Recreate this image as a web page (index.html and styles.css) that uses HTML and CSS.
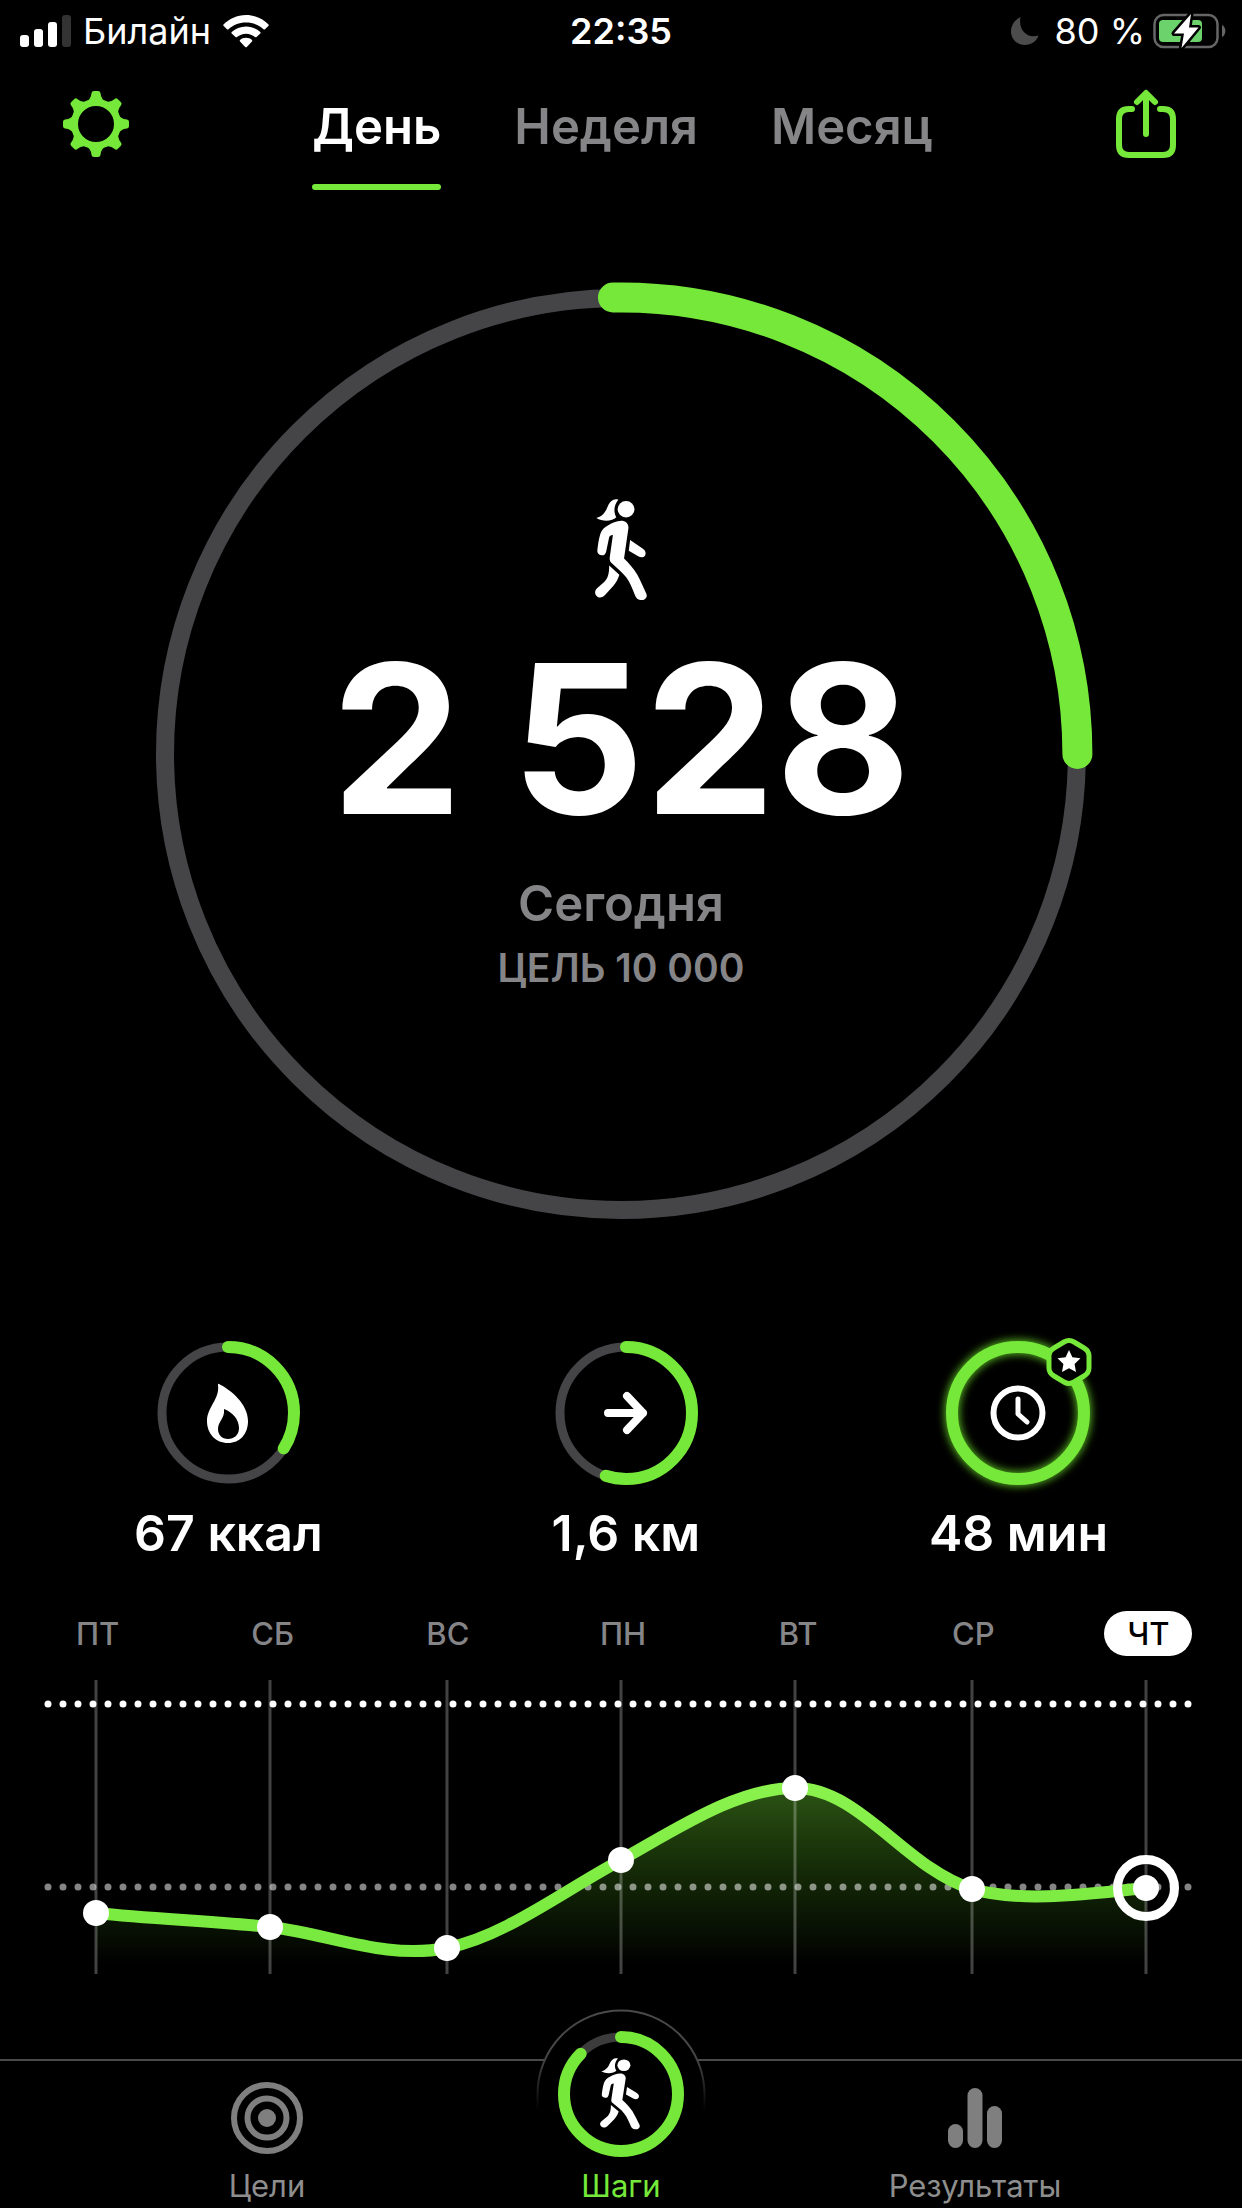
FILE: index.html
```html
<!DOCTYPE html>
<html lang="ru">
<head>
  <meta charset="UTF-8" />
  <meta name="viewport" content="width=device-width, initial-scale=1.0"/>
  <title>Шаги</title>
  <link rel="stylesheet" href="styles.css">
</head>
<body>
  <!-- shared shapes -->
  <svg class="defs" width="0" height="0" aria-hidden="true">
    <symbol id="walker" viewBox="162 718 154 308" preserveAspectRatio="none">
      <g fill="#fff">
        <circle cx="254" cy="749" r="25"/>
        <path d="M231 720C216 716 206 726 200 740C194 755 185 771 166 775C184 787 213 786 225 773C216 757 218 736 231 720Z"/>
        <path d="M240 784C252 784 262 793 261 806L248 898C262 912 276 928 287 946C297 965 306 986 314 1004C319 1017 307 1025 296 1023C289 1022 284 1017 281 1010C273 990 266 970 255 955C242 937 224 924 211 911C205 905 205 900 206 892L215 827C207 827 204 831 203 838L195 877C193 885 188 889 181 888C172 887 168 881 169 872C171 856 173 838 178 823C182 811 190 803 200 798C211 791 226 784 240 784Z"/>
        <path d="M266 842L304 868C312 874 314 882 310 889C305 895 298 896 290 891L262 874Z"/>
        <path d="M204 919L234 947C231 958 225 970 216 981L191 1009C183 1017 173 1018 167 1011C160 1004 161 994 169 987L190 968C201 957 204 942 204 919Z"/>
      </g>
    </symbol>
    <linearGradient id="area" gradientUnits="userSpaceOnUse" x1="0" y1="100" x2="0" y2="285">
      <stop offset="0" stop-color="#7be83c" stop-opacity=".38"/>
      <stop offset=".55" stop-color="#63d020" stop-opacity=".18"/>
      <stop offset="1" stop-color="#63d020" stop-opacity="0"/>
    </linearGradient>
    <linearGradient id="curve" gradientUnits="userSpaceOnUse" x1="0" y1="100" x2="0" y2="280">
      <stop offset="0" stop-color="#8bf24d"/>
      <stop offset="1" stop-color="#76e83d"/>
    </linearGradient>
    <linearGradient id="notch" gradientUnits="userSpaceOnUse" x1="0" y1="2" x2="0" y2="104">
      <stop offset="0" stop-color="#4a4a4a"/>
      <stop offset=".5" stop-color="#444"/>
      <stop offset="1" stop-color="#444" stop-opacity="0"/>
    </linearGradient>
    <filter id="glow" x="-20%" y="-20%" width="140%" height="140%">
      <feGaussianBlur stdDeviation="4"/>
    </filter>
  </svg>

  <div class="status-bar">
    <div class="status-left">
      <svg width="51" height="32" viewBox="0 0 51 32" fill="#fff">
        <rect x="0" y="20" width="9" height="12" rx="3"/>
        <rect x="14" y="14" width="9" height="18" rx="3"/>
        <rect x="28" y="7" width="9" height="25" rx="3"/>
        <rect x="42" y="0" width="9" height="32" rx="3" fill="#333"/>
      </svg>
      <span>Билайн</span>
      <svg width="46" height="33" viewBox="0 0 46 33" fill="#fff">
        <path d="M23 0C32 0 40 4 45.5 9.5Q46 10.3 45.3 11L42 14.2Q41.3 14.8 40.5 14.2C36 10 30 7.5 23 7.500S10 10 5.5 14.2Q4.7 14.8 4 14.2L.7 11Q0 10.3.5 9.5C6 4 14 0 23 0Z"/>
        <path d="M23 11.5C28.5 11.5 33.5 13.7 37.3 17Q38 17.8 37.3 18.5L33.5 22Q32.8 22.6 32 22C29.5 20 26.5 18.7 23 18.7S16.5 20 14 22Q13.2 22.6 12.5 22L8.7 18.5Q8 17.8 8.7 17C12.5 13.7 17.5 11.5 23 11.5Z"/>
        <path d="M23 22.8C25.5 22.8 27.5 23.6 29 25Q29.8 25.8 29 26.5L23.8 32Q23 32.7 22.2 32L17 26.5Q16.2 25.8 17 25C18.5 23.6 20.5 22.8 23 22.8Z"/>
      </svg>
    </div>
    <time class="status-time">22:35</time>
    <div class="status-right">
      <svg class="moon" width="28" height="28" viewBox="0 0 28 28">
        <path d="M9.5 0C2 4 0 10 0 14.5C0 22 6 28 14 28C20 28 25.5 24.5 27.5 18.5C16 22 7 13 9.5 0Z" fill="#4c4c4c"/>
      </svg>
      <span>80 %</span>
      <svg width="69" height="36" viewBox="0 0 69 36">
        <rect x="1.5" y="2" width="63" height="32" rx="9" fill="none" stroke="#666" stroke-width="2.5"/>
        <path d="M69 12C73.5 14 73.5 22 69 24Z" fill="#666"/>
        <rect x="6" y="7" width="43" height="22" rx="4" fill="#6bd26c"/>
        <path d="M38 1L21 20.5H31L28.5 35L45.5 14.5H36Z" fill="#fff" stroke="#000" stroke-width="5" stroke-linejoin="round" paint-order="stroke"/>
      </svg>
    </div>
  </div>

  <header>
    <button class="icon-btn" aria-label="Настройки">
      <svg width="66" height="66" viewBox="-33 -33 66 66">
        <g fill="#75e83a">
          <g id="teeth">
            <path id="tooth" d="M-11 -22Q-5 -24 -4.5 -31Q-4.2 -33 -2 -33H2Q4.2 -33 4.5 -31Q5 -24 11 -22Z"/>
            <use href="#tooth" transform="rotate(45)"/>
            <use href="#tooth" transform="rotate(90)"/>
            <use href="#tooth" transform="rotate(135)"/>
          </g>
          <use href="#teeth" transform="rotate(180)"/>
        </g>
        <circle r="21.5" fill="#000" stroke="#75e83a" stroke-width="7"/>
      </svg>
    </button>
    <nav class="tabs">
      <button class="tab active">День</button>
      <button class="tab">Неделя</button>
      <button class="tab">Месяц</button>
    </nav>
    <button class="icon-btn" aria-label="Поделиться">
      <svg width="60" height="70" viewBox="0 0 60 70" fill="none" stroke="#75e83a" stroke-width="6" stroke-linecap="round" stroke-linejoin="round">
        <path d="M16 20H13Q3 20 3 30V56Q3 66 13 66H47Q57 66 57 56V30Q57 20 47 20H44"/>
        <path d="M30 45V5M21 13L30 4L39 13"/>
      </svg>
    </button>
  </header>

  <main>
    <section class="goal">
      <svg class="goal-ring" viewBox="0 0 944 944" fill="none">
        <circle cx="472" cy="472" r="456" stroke="#454447" stroke-width="18"/>
        <path d="M464 15.5H472A456.5 456.5 0 0 1 928.5 472" stroke="#75e83a" stroke-width="30" stroke-linecap="round"/>
      </svg>
      <div class="goal-info">
        <svg width="52" height="102"><use href="#walker"/></svg>
        <div class="steps">2 528</div>
        <div class="period">Сегодня</div>
        <div class="target">ЦЕЛЬ 10 000</div>
      </div>
    </section>

    <section class="stats">
      <div class="stat">
        <svg width="168" height="168" viewBox="-84 -84 168 168" fill="none">
          <circle r="66" stroke="#454447" stroke-width="9"/>
          <circle class="progress" r="66" pathLength="100" stroke-dasharray="34 100"/>
          <path fill="#fff" fill-rule="evenodd" d="M-9 -29C3 -23 20 -9 20 8C20 21 12 30 0 30S-21 21 -21 8C-21 -6 -8 -14 -10 -28Q-10 -30 -9 -29ZM-4 -4C-3 6 -10 8 -10 16C-10 22 -6 26 0 26S11 22 11 15C11 6 4 -1 -4 -4Z"/>
        </svg>
        <div class="stat-value">67 ккал</div>
      </div>
      <div class="stat">
        <svg width="168" height="168" viewBox="-84 -84 168 168" fill="none">
          <circle r="66" stroke="#454447" stroke-width="9"/>
          <circle class="progress" r="66" pathLength="100" stroke-dasharray="55 100"/>
          <path d="M-18 0H17M1 -17L17 0L1 17" stroke="#fff" stroke-width="8" stroke-linecap="round" stroke-linejoin="round"/>
        </svg>
        <div class="stat-value">1,6 км</div>
      </div>
      <div class="stat">
        <svg width="168" height="168" viewBox="-84 -84 168 168" fill="none">
          <circle r="66" stroke="#5bbd22" stroke-width="14" filter="url(#glow)"/>
          <circle r="66" stroke="#75e83a" stroke-width="12"/>
          <circle r="24.5" stroke="#fff" stroke-width="6"/>
          <path d="M0 -14V1L9 9" stroke="#fff" stroke-width="5" stroke-linecap="round" stroke-linejoin="round"/>
          <g transform="translate(51 -51)">
            <path d="M-5 -20Q0 -23 5 -20L15 -14Q20 -11 20 -6V6Q20 11 15 14L5 20Q0 23 -5 20L-15 14Q-20 11 -20 6V-6Q-20 -11 -15 -14Z" fill="#000" stroke="#75e83a" stroke-width="5"/>
            <path d="M0 -12L3.4 -4.8L11.5 -3.8L5.6 1.9L7 10L0 6.2L-7 10L-5.6 1.9L-11.5 -3.8L-3.4 -4.8Z" fill="#fff"/>
          </g>
        </svg>
        <div class="stat-value">48 мин</div>
      </div>
    </section>

    <section class="week">
      <div class="days">
        <button class="day">ПТ</button>
        <button class="day">СБ</button>
        <button class="day">ВС</button>
        <button class="day">ПН</button>
        <button class="day">ВТ</button>
        <button class="day">СР</button>
        <button class="day selected">ЧТ</button>
      </div>
      <svg class="chart" viewBox="0 0 1242 294" fill="none">
        <path fill="url(#area)" d="M96 233C154 239 212 241 270 247C330 254 385 280 447 268C505 256 560 213 621 180C680 147 738 108 795 108C860 108 905 188 972 209C1020 223 1088 214 1146 208V294H96Z"/>
        <path d="M96 0V294M270 0V294M447 0V294M621 0V294M795 0V294M972 0V294M1146 0V294" stroke="#fff" stroke-opacity=".26" stroke-width="3"/>
        <path class="dots" d="M48 24H1190"/>
        <path class="dots average" d="M48 207H1190"/>
        <path d="M96 233C154 239 212 241 270 247C330 254 385 280 447 268C505 256 560 213 621 180C680 147 738 108 795 108C860 108 905 188 972 209C1020 223 1088 214 1146 208" stroke="url(#curve)" stroke-width="12"/>
        <g fill="#fff">
          <circle cx="96" cy="233" r="13"/>
          <circle cx="270" cy="247" r="13"/>
          <circle cx="447" cy="268" r="13"/>
          <circle cx="621" cy="180" r="13"/>
          <circle cx="795" cy="108" r="13"/>
          <circle cx="972" cy="209" r="13"/>
          <circle cx="1146" cy="208" r="13"/>
        </g>
        <circle cx="1146" cy="208" r="28.5" stroke="#fff" stroke-width="9"/>
      </svg>
    </section>
  </main>

  <nav class="tab-bar">
    <button class="tab-item">
      <svg width="72" height="72" viewBox="-36 -36 72 72" fill="none" stroke="#7f7f7f" stroke-width="6">
        <circle r="33"/>
        <circle r="19.5"/>
        <circle r="9" fill="#7f7f7f" stroke="none"/>
      </svg>
      <span>Цели</span>
    </button>
    <button class="tab-item current">
      <svg class="steps-icon" width="170" height="150" viewBox="-85 -90 170 150" fill="none">
        <circle r="84" fill="#000"/>
        <g transform="translate(-85 -87)">
          <path d="M1.5 104V87A83.5 83.5 0 0 1 168.5 87V104" stroke="url(#notch)" stroke-width="2"/>
        </g>
        <circle r="57" stroke="#3c3c3c" stroke-width="9"/>
        <circle class="progress" r="57" pathLength="100" stroke-dasharray="87.5 100"/>
        <use href="#walker" x="-21" y="-36" width="40" height="72"/>
      </svg>
      <span>Шаги</span>
    </button>
    <button class="tab-item">
      <svg width="72" height="72" viewBox="-36 -36 72 72" fill="#7f7f7f">
        <rect x="-27" y="6" width="15" height="24" rx="7.5"/>
        <rect x="-7.5" y="-30" width="15" height="60" rx="7.5"/>
        <rect x="12" y="-12" width="15" height="42" rx="7.5"/>
      </svg>
      <span>Результаты</span>
    </button>
  </nav>
</body>
</html>
```

FILE: styles.css
```css
body {
  margin: 0;
  min-height: 100vh;
  display: flex;
  flex-direction: column;
  background: #000;
  color: #fff;
  font-family: Inter, "Liberation Sans", sans-serif;
}
button {
  font: inherit;
  color: inherit;
  background: none;
  border: none;
  padding: 0;
  cursor: pointer;
}
svg {
  display: block;
  flex-shrink: 0;
  overflow: visible;
}
.defs {
  position: absolute;
}

/* status bar */
.status-bar {
  display: grid;
  grid-template-columns: 1fr auto 1fr;
  align-items: center;
  height: 62px;
  padding: 0 20px;
  font-size: 36px;
  line-height: 62px;
}
.status-left,
.status-right {
  display: flex;
  align-items: center;
  gap: 12px;
}
.status-right {
  justify-content: flex-end;
  gap: 8px;
}
.moon {
  margin-right: 8px;
}
.status-time {
  font-weight: 600;
}

/* header */
header {
  display: flex;
  justify-content: space-between;
  align-items: flex-start;
  padding: 0 66px 0 63px;
}
.icon-btn {
  display: flex;
  align-items: center;
  justify-content: center;
  height: 124px;
}
.tabs {
  display: flex;
  gap: 73px;
}
.tab {
  padding-top: 35px;
  font-size: 49px;
  line-height: 60px;
  font-weight: 600;
  color: #858588;
}
.tab::after {
  content: "";
  display: block;
  height: 6px;
  margin-top: 27px;
  border-radius: 3px;
}
.tab.active {
  color: #fff;
}
.tab.active::after {
  background: #75e83a;
}

/* daily goal */
.goal {
  display: grid;
  justify-items: center;
  align-items: center;
  margin-top: 92px;
}
.goal-ring,
.goal-info {
  grid-area: 1 / 1;
}
.goal-ring {
  width: 76%;
}
.goal-info {
  display: flex;
  flex-direction: column;
  align-items: center;
  padding-bottom: 16px;
}
.steps {
  margin-top: 35px;
  font-size: 208px;
  line-height: 204px;
  font-weight: 700;
}
.period {
  margin-top: 34px;
  font-size: 49px;
  line-height: 60px;
  font-weight: 600;
  color: #858588;
}
.target {
  margin-top: 10px;
  font-size: 39px;
  line-height: 48px;
  font-weight: 600;
  color: #858588;
}

/* calories, distance, time */
.stats {
  display: flex;
  justify-content: space-between;
  margin-top: 103px;
  padding: 0 134px;
}
.stat {
  display: flex;
  flex-direction: column;
  align-items: center;
}
.stat-value {
  margin-top: 6px;
  font-size: 50px;
  line-height: 60px;
  font-weight: 600;
}
.progress {
  stroke: #75e83a;
  stroke-width: 12px;
  stroke-linecap: round;
  transform: rotate(-90deg);
}

/* week chart */
.days {
  display: grid;
  grid-template-columns: repeat(7, 1fr);
  justify-items: center;
  margin-top: 48px;
  padding: 0 6px 0 10px;
}
.day {
  padding: 0 23px;
  border-radius: 23px;
  font-size: 31px;
  line-height: 45px;
  font-weight: 500;
  color: #858588;
}
.day.selected {
  background: #fff;
  color: #000;
}
.chart {
  width: 100%;
  margin-top: 24px;
}
.dots {
  stroke: #fff;
  stroke-width: 7px;
  stroke-linecap: round;
  stroke-dasharray: 0 15;
}
.dots.average {
  stroke-opacity: .52;
}

/* bottom bar */
.tab-bar {
  display: grid;
  grid-template-columns: repeat(3, 1fr);
  margin-top: auto;
  padding: 21px 90px 4px;
  border-top: 2px solid #4a4a4a;
}
.tab-item {
  display: flex;
  flex-direction: column;
  align-items: center;
  gap: 14px;
  font-size: 31px;
  line-height: 36px;
  color: #8e8e8e;
}
.tab-item.current {
  color: #75e83a;
}
.steps-icon {
  margin-top: -78px;
}
```
